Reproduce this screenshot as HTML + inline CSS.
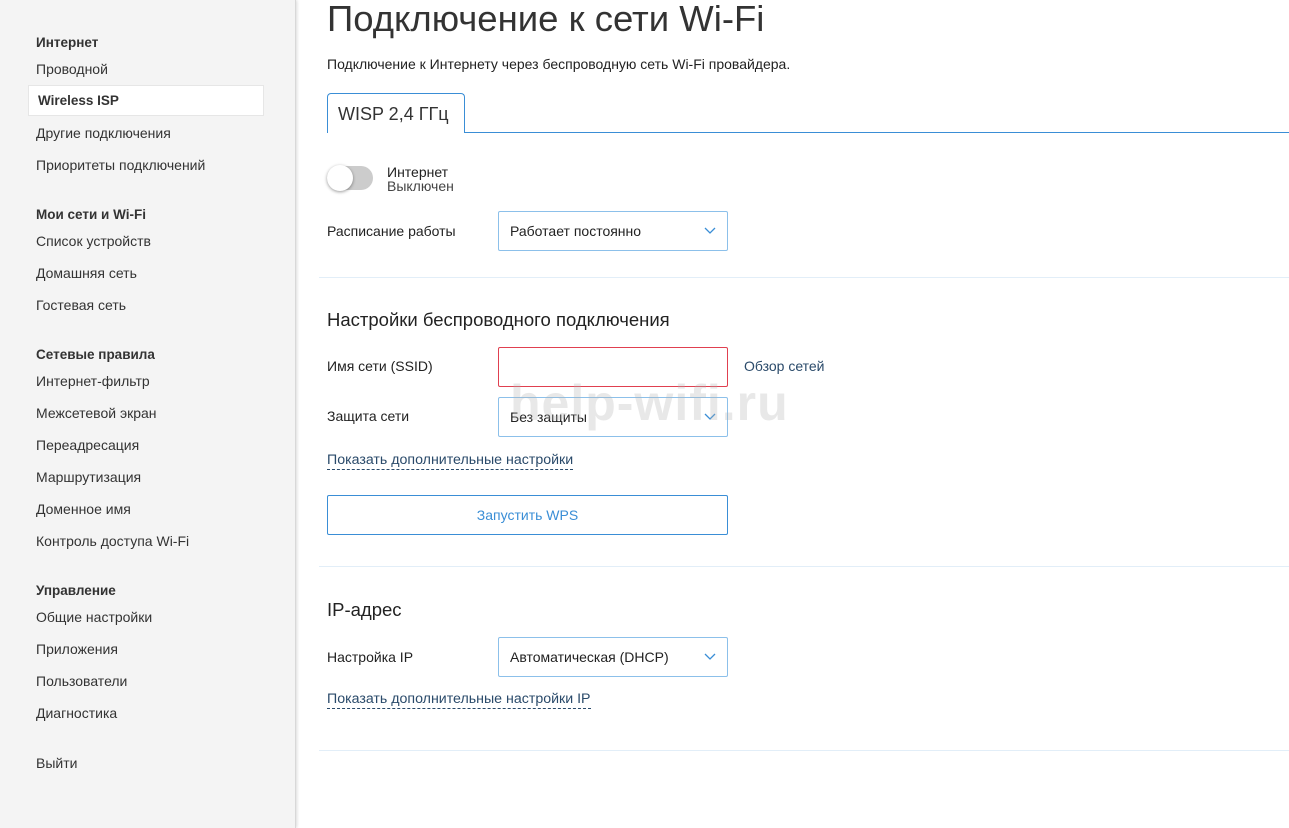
<!DOCTYPE html>
<html><head><meta charset="utf-8"><style>
*{box-sizing:border-box;margin:0;padding:0}
body{width:1289px;height:828px;overflow:hidden;background:#fff;font-family:"Liberation Sans","Noto Sans CJK SC",sans-serif;color:#222;position:relative}
.side{position:absolute;left:0;top:0;width:296px;height:828px;background:#f4f4f4;border-right:1px solid #d8d8d8;box-shadow:1px 0 3px rgba(0,0,0,.15)}
.side div{position:absolute;left:36px;font-size:14px;color:#333}
.side .h{font-weight:bold;font-size:13.5px;color:#333}
.side .act{left:28px;width:236px;height:31px;background:#fff;border:1px solid #e6e6e6;padding:7px 0 0 9px;font-weight:bold;font-size:13.5px}
.a{position:absolute;font-size:14px;color:#222}
h1{position:absolute;left:327px;top:-2px;font-weight:normal;font-size:36.5px;color:#333}
.tab{position:absolute;left:327px;top:93px;width:138px;height:40px;border:1px solid #3a8ed6;border-bottom:none;border-radius:4px 4px 0 0;background:#fff;font-size:18px;padding:10px 0 0 10px;color:#333}
.tabline{position:absolute;left:465px;top:132px;width:824px;height:1px;background:#3a8ed6}
.sel{position:absolute;left:498px;width:230px;height:40px;border:1px solid #8cc0ea;font-size:14px;padding:11px 0 0 11px;border-radius:2px}
.sel svg{position:absolute;right:11px;top:15px}
.hr{position:absolute;left:319px;width:970px;height:1px;background:#e2eef8}
.link{position:absolute;left:327px;font-size:14.2px;color:#2a4a6a;border-bottom:1px dashed #2a4a6a;line-height:17px}
</style></head><body>
<div class="side">
<div class="h" style="top:35px">Интернет</div>
<div style="top:61px">Проводной</div>
<div class="act" style="top:85px">Wireless ISP</div>
<div style="top:125px">Другие подключения</div>
<div style="top:157px">Приоритеты подключений</div>
<div class="h" style="top:207px">Мои сети и Wi-Fi</div>
<div style="top:233px">Список устройств</div>
<div style="top:265px">Домашняя сеть</div>
<div style="top:297px">Гостевая сеть</div>
<div class="h" style="top:347px">Сетевые правила</div>
<div style="top:373px">Интернет-фильтр</div>
<div style="top:405px">Межсетевой экран</div>
<div style="top:437px">Переадресация</div>
<div style="top:469px">Маршрутизация</div>
<div style="top:501px">Доменное имя</div>
<div style="top:533px">Контроль доступа Wi-Fi</div>
<div class="h" style="top:583px">Управление</div>
<div style="top:609px">Общие настройки</div>
<div style="top:641px">Приложения</div>
<div style="top:673px">Пользователи</div>
<div style="top:705px">Диагностика</div>
<div style="top:755px">Выйти</div>
</div>
<h1>Подключение к сети Wi-Fi</h1>
<div class="a" style="left:327px;top:56px;font-size:14px">Подключение к Интернету через беспроводную сеть Wi-Fi провайдера.</div>
<div class="tab">WISP 2,4 ГГц</div>
<div class="tabline"></div>
<div style="position:absolute;left:327px;top:166px;width:46px;height:24px;border-radius:12px;background:#ccc"></div>
<div style="position:absolute;left:327px;top:165px;width:26px;height:26px;border-radius:13px;background:#fff;box-shadow:0 1px 3px rgba(0,0,0,.4)"></div>
<div class="a" style="left:387px;top:165px;line-height:14px">Интернет<br><span style="color:#444">Выключен</span></div>
<div class="a" style="left:327px;top:223px">Расписание работы</div>
<div class="sel" style="top:211px">Работает постоянно<svg width="12" height="8"><path d="M1 1l5 5 5-5" stroke="#3a8ed6" stroke-width="1.3" fill="none"/></svg></div>
<div class="hr" style="top:277px"></div>
<div class="a" style="left:327px;top:309px;font-size:18.5px">Настройки беспроводного подключения</div>
<div class="a" style="left:327px;top:358px">Имя сети (SSID)</div>
<div class="sel" style="top:347px;border-color:#e04050"></div>
<div class="a" style="left:744px;top:358px;color:#2a4a6a">Обзор сетей</div>
<div class="a" style="left:327px;top:408px">Защита сети</div>
<div class="sel" style="top:397px">Без защиты<svg width="12" height="8"><path d="M1 1l5 5 5-5" stroke="#3a8ed6" stroke-width="1.3" fill="none"/></svg></div>
<div class="link" style="top:452px">Показать дополнительные настройки</div>
<div style="position:absolute;left:327px;top:495px;width:401px;height:40px;border:1px solid #3a8ed6;border-radius:2px;text-align:center;line-height:38px;font-size:14px;color:#3a8ed6">Запустить WPS</div>
<div class="hr" style="top:566px"></div>
<div class="a" style="left:327px;top:599px;font-size:18.5px">IP-адрес</div>
<div class="a" style="left:327px;top:649px">Настройка IP</div>
<div class="sel" style="top:637px">Автоматическая (DHCP)<svg width="12" height="8"><path d="M1 1l5 5 5-5" stroke="#3a8ed6" stroke-width="1.3" fill="none"/></svg></div>
<div class="link" style="top:691px">Показать дополнительные настройки IP</div>
<div class="hr" style="top:750px"></div>
<div style="position:absolute;left:510px;top:374px;font-size:50px;font-weight:bold;color:rgba(180,180,180,.3);letter-spacing:1px">help-wifi.ru</div>
</body></html>
